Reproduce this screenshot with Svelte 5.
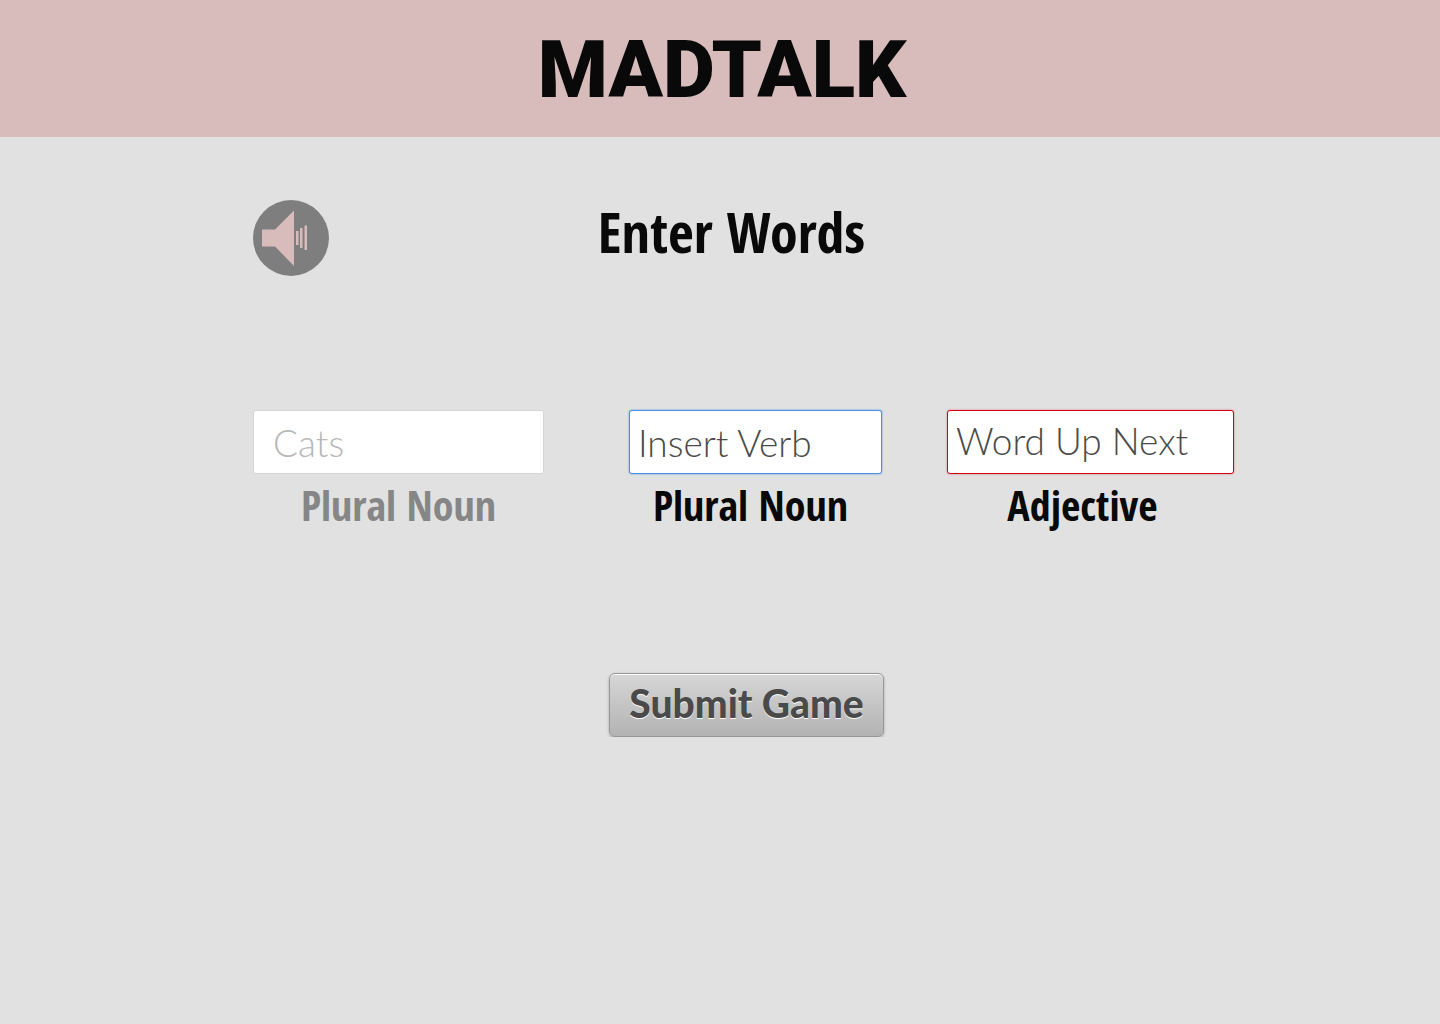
<script>
  const fields = [
    { id: 'first', value: 'Cats', label: 'Plural Noun', state: 'done' },
    { id: 'second', value: 'Insert Verb', label: 'Plural Noun', state: 'active' },
    { id: 'third', value: 'Word Up Next', label: 'Adjective', state: 'next' },
  ];
</script>

<header>
  <h1>MADTALK</h1>
</header>

<main>
  <div class="top">
    <button class="sound" type="button" aria-label="Sound">
      <svg viewBox="0 0 76 76" aria-hidden="true">
        <circle cx="38" cy="38" r="38" fill="#7e7e7e" />
        <path d="M9 29.500H22L41 10.500V66L22 46.500H9Z" fill="#d7bcbb" />
        <path d="M43 31h2.500v14h-2.500zM47 28h2.500v20h-2.500zM51.500 25.500h2.500v24.500h-2.500z" fill="#d7bcbb" />
      </svg>
    </button>
    <h2>Enter Words</h2>
  </div>

  <form onsubmit={(e) => e.preventDefault()}>
    <div class="fields">
      {#each fields as f}
        <div class="field {f.state}">
          <input id={f.id} type="text" value={f.value} />
          <label for={f.id}>{f.label}</label>
        </div>
      {/each}
    </div>
    <button class="submit" type="submit">Submit Game</button>
  </form>
</main>

<style>
  :global(body) {
    background: #e1e1e1;
    color: #090909;
  }

  header {
    background: #d7bcbb;
    padding: 26px 0 23px 4px;
    text-align: center;
  }

  h1 {
    margin: 0;
    font: 900 80px/88px Roboto, sans-serif;
  }

  main {
    padding: 60px 206px 0 253px;
  }

  .top {
    display: grid;
    grid-template-columns: 76px 1fr 100px;
    align-items: start;
  }

  .sound {
    width: 76px;
    height: 76px;
    margin: 3px 0 0;
    padding: 0;
    border: 0;
    border-radius: 50%;
    background: none;
  }

  .sound svg {
    display: block;
  }

  h2 {
    margin: 0;
    font: 700 56px/68px 'Noto Sans ExtraCondensed', 'Open Sans Condensed', 'Roboto Condensed', sans-serif;
    text-align: center;
    white-space: nowrap;
  }

  .fields {
    display: grid;
    grid-template-columns: 376fr 318fr 287fr;
    margin-top: 134px;
  }

  .field {
    display: flex;
    flex-direction: column;
  }

  .done {
    margin-right: 85px;
  }

  .active {
    margin-right: 65px;
  }

  input {
    box-sizing: border-box;
    width: 100%;
    height: 64px;
    padding: 0 8px;
    border: 1px solid #d5d5d5;
    border-radius: 3px;
    background: #fff;
    color: #4a4a4a;
    font: 300 37px/44px Lato, sans-serif;
    outline: none;
  }

  .done input {
    padding-left: 19px;
    color: #b8b8b8;
  }

  .active input {
    border-color: #4a90e2;
    box-shadow: 0 0 2px #4a90e2;
  }

  .next input {
    padding-bottom: 4px;
    border-color: #d0021b;
    box-shadow: 0 0 2px #d0021b88;
  }

  label {
    font: 700 42px/56px 'Noto Sans ExtraCondensed', 'Open Sans Condensed', 'Roboto Condensed', sans-serif;
    text-align: center;
    white-space: nowrap;
    margin-top: 3px;
  }

  .done label {
    color: #868686;
  }

  .active label {
    margin-right: 10px;
  }

  .next label {
    margin-right: 16px;
  }

  form {
    display: grid;
  }

  .submit {
    justify-self: center;
    height: 64px;
    margin: 140px 0 0 6px;
    padding: 0 19px 4px;
    border: 1px solid #979797;
    border-radius: 6px;
    background: linear-gradient(#d6d6d6, #b3b3b3);
    box-shadow: inset 0 1px 0 #fff, 0 1px 3px #0004;
    color: #4a4a4a;
    font: 900 39px/44px Lato, sans-serif;
    text-shadow: 0 1px 0 #fff;
    white-space: nowrap;
  }
</style>
